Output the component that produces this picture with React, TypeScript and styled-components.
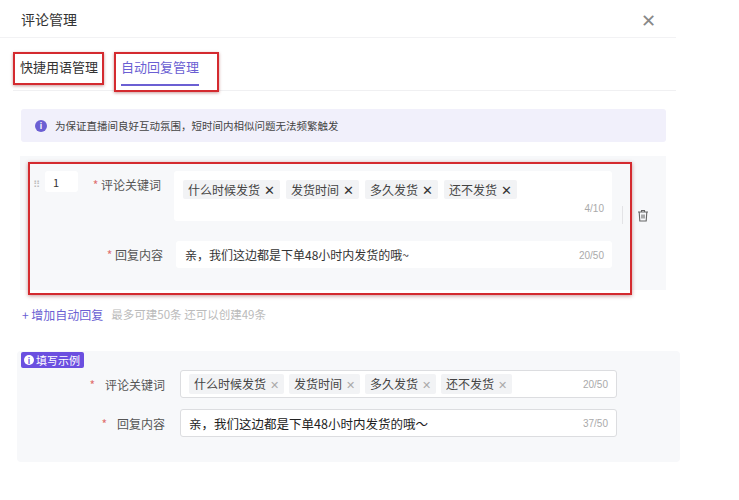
import React from "react";
import styled, { createGlobalStyle } from "styled-components";

const G = createGlobalStyle`
  body { margin: 0; background: #fff; font-family: "Noto Sans CJK SC", "Noto Sans", sans-serif; color: #333; }
`;
const Page = styled.div` width: 676px; height: 500px; position: relative; `;
const Header = styled.div`
  height: 37px; display: flex; align-items: center; justify-content: space-between;
  padding: 0 20px 0 21px; border-bottom: 1px solid #f2f2f4; font-size: 14px; color: #333;
`;
const Close = styled.span` font-size: 18px; color: #888; font-weight: 300; `;
const Tabs = styled.div`
  display: flex; gap: 10px; margin: 14px 0 0 13px; border-bottom: 1px solid #f0f0f2; height: 38px;
`;
const Tab = styled.div<{ $active?: boolean }>`
  position: relative; font-size: 13px; color: ${p => (p.$active ? "#6b5fd3" : "#333")};
  border: 2px solid #d42a2f; box-shadow: 0 1px 3px rgba(120,0,0,.4);
  padding: 3px ${p => (p.$active ? "18px 0 5px" : "4px 0 5px")}; height: ${p => (p.$active ? "40px" : "33px")}; box-sizing: border-box;
  ${p => p.$active && `&:after{content:"";position:absolute;left:5px;right:18px;bottom:4px;height:2px;background:#6b5fd3;}`}
`;
const Banner = styled.div`
  margin: 18px 10px 0 21px; height: 33px; background: #f1f0fb; border-radius: 3px;
  display: flex; align-items: center; gap: 8px; padding-left: 14px; font-size: 10.5px; color: #444;
`;
const Dot = styled.span<{ $size?: number; $bg?: string; $fg?: string }>`
  width: ${p => p.$size || 12}px; height: ${p => p.$size || 12}px; border-radius: 50%;
  background: ${p => p.$bg || "#6b5fd3"}; color: ${p => p.$fg || "#fff"};
  font-size: 8px; font-weight: 700; display: inline-flex; align-items: center; justify-content: center;
`;
const Card = styled.div`
  margin: 14px 10px 0 20px; background: #f7f8fa; display: flex; padding: 6px 0 0 8px; height: 134px; box-sizing: border-box;
`;
const Boxed = styled.div`
  width: 604px; height: 133px; box-sizing: border-box; border: 2.5px solid #d42a2f;
  box-shadow: 0 1px 4px rgba(120,0,0,.4); padding: 7px 18px 0 3px; display: flex; flex-direction: column; gap: 20px;
`;
const Row = styled.div` display: flex; align-items: flex-start; `;
const Handle = styled.span` width: 10px; color: #bbb; font-size: 10px; margin-top: 5px; letter-spacing: -2px; `;
const Num = styled.div`
  width: 33px; height: 21px; background: #fff; border-radius: 3px; font-size: 11px;
  display: flex; align-items: center; padding-left: 8px; box-sizing: border-box; margin-left: 2px;
`;
const Label = styled.div<{ $w: number }>`
  width: ${p => p.$w}px; text-align: right; padding-right: 13px; font-size: 12px; color: #555; margin-top: 5px; flex: none; box-sizing: border-box;
  &:before { content: "* "; color: #e07070; }
`;
const Area = styled.div<{ $h: number }>`
  flex: 1; height: ${p => p.$h}px; background: #fff; border-radius: 3px; position: relative;
  display: flex; align-items: flex-start; gap: 6px; padding: 9px 0 0 9px; box-sizing: border-box; font-size: 12px; color: #333;
`;
const Tag = styled.span<{ $small?: boolean }>`
  background: #f2f3f5; padding: 0 5px; height: ${p => (p.$small ? 20 : 19)}px; line-height: ${p => (p.$small ? 20 : 19)}px;
  font-size: 12px; color: #444; border-radius: 2px; white-space: nowrap;
  & b { font-weight: 400; margin-left: 4px; color: ${p => (p.$small ? "#aaa" : "#333")}; font-size: ${p => (p.$small ? 11 : 13)}px; }
`;
const Count = styled.span<{ $bottom?: boolean }>`
  position: absolute; right: 8px; ${p => (p.$bottom ? "bottom: 7px;" : "top: 50%; transform: translateY(-50%);")}
  font-size: 10px; color: #aaa; font-family: "Liberation Sans", sans-serif;
`;
const Side = styled.div`
  display: flex; align-items: center; align-self: flex-start; padding: 44px 0 0 0; margin-left: -10px; gap: 14px; color: #666;
  &:before { content: ""; width: 1px; height: 18px; background: #e3e3e6; }
`;
const Add = styled.div`
  margin: 16px 0 0 22px; font-size: 12px; color: #6b5fd3; display: flex; gap: 8px;
  & span { color: #bbb; font-size: 11.5px; }
`;
const Example = styled.div`
  margin: 28px 0 0 17px; width: 663px; height: 111px; background: #f7f8fa; border-radius: 4px; position: relative;
  padding: 19px 0 0 0; box-sizing: border-box; display: flex; flex-direction: column; gap: 11px;
`;
const Badge = styled.div`
  position: absolute; left: 4px; top: 1px; background: #6b4fe0; color: #fff; font-size: 11px; height: 16px;
  padding: 0 4px 0 3px; display: flex; align-items: center; gap: 2px; border-radius: 2px;
`;
const ExRow = styled.div` display: flex; align-items: center; padding-right: 63px; `;
const ExLabel = styled.div<{ $w: number }>`
  width: ${p => p.$w}px; text-align: right; padding-right: 15px; font-size: 12px; color: #555; flex: none; box-sizing: border-box;
  &:before { content: "*"; color: #e07070; margin-right: 10px; }
`;
const ExInput = styled.div`
  flex: 1; height: 28px; border: 1px solid #dcdde0; background: #fff; border-radius: 3px; position: relative;
  display: flex; align-items: center; gap: 5px; padding-left: 8px; box-sizing: border-box; font-size: 12.5px; color: #222;
`;

const kws = ["什么时候发货", "发货时间", "多久发货", "还不发货"];

export default function App() {
  return (
    <Page>
      <G />
      <Header>评论管理<Close>✕</Close></Header>
      <Tabs>
        <Tab>快捷用语管理</Tab>
        <Tab $active>自动回复管理</Tab>
      </Tabs>
      <Banner><Dot>i</Dot>为保证直播间良好互动氛围，短时间内相似问题无法频繁触发</Banner>
      <Card>
        <Boxed>
          <Row>
            <Handle>⠿</Handle>
            <Num>1</Num>
            <Label $w={96}>评论关键词</Label>
            <Area $h={50}>
              {kws.map(k => <Tag key={k}>{k}<b>✕</b></Tag>)}
              <Count $bottom>4/10</Count>
            </Area>
          </Row>
          <Row>
            <Label $w={143}>回复内容</Label>
            <Area $h={27} style={{ paddingTop: 5 }}>亲，我们这边都是下单48小时内发货的哦~<Count>20/50</Count></Area>
          </Row>
        </Boxed>
        <Side>
          <svg width="12" height="13" viewBox="0 0 12 13" fill="none" stroke="#666" strokeWidth="1.1">
            <path d="M1 3h10M4.5 3V1.5h3V3M2.2 3l.6 9h6.4l.6-9M5 5.5v4M7 5.5v4" />
          </svg>
        </Side>
      </Card>
      <Add>+ 增加自动回复<span>最多可建50条 还可以创建49条</span></Add>
      <Example>
        <Badge><Dot $size={10} $bg="#fff" $fg="#6b4fe0">i</Dot>填写示例</Badge>
        <ExRow>
          <ExLabel $w={163}>评论关键词</ExLabel>
          <ExInput>
            {kws.map(k => <Tag $small key={k}>{k}<b>✕</b></Tag>)}
            <Count>20/50</Count>
          </ExInput>
        </ExRow>
        <ExRow>
          <ExLabel $w={163}>回复内容</ExLabel>
          <ExInput>亲，我们这边都是下单48小时内发货的哦～<Count>37/50</Count></ExInput>
        </ExRow>
      </Example>
    </Page>
  );
}
